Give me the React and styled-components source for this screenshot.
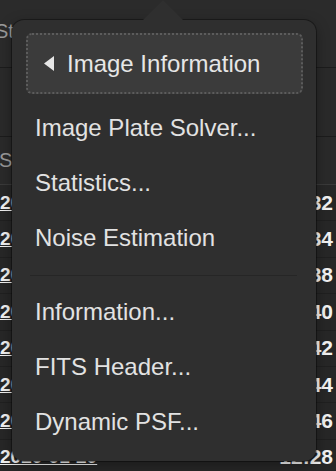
import React from "react";
import styled, { createGlobalStyle } from "styled-components";

const Global = createGlobalStyle`
  html, body { margin: 0; padding: 0; background: #272727; overflow: hidden; }
  body { font-family: "Liberation Sans", Helvetica, Arial, sans-serif; }
`;

const Page = styled.div`
  position: relative;
  width: 336px;
  height: 471px;
  overflow: hidden;
  background: #272727;
`;

const Table = styled.div`
  display: flex;
  flex-direction: column;
`;

const Band = styled.div`
  height: ${(p) => p.$h}px;
  box-sizing: border-box;
  background: ${(p) => p.$bg || "#2a2a2a"};
  border-bottom: 1px solid ${(p) => p.$line || "#1c1c1c"};
  display: flex;
  align-items: center;
  color: #9a9a9a;
  font-size: 20px;
  overflow: hidden;
  white-space: nowrap;
`;

const HeadText = styled.span`
  margin-left: ${(p) => p.$shift || 0}px;
  align-self: ${(p) => p.$align || "center"};
  margin-top: ${(p) => p.$top || 0}px;
`;

const Row = styled.div`
  height: 36.4px;
  box-sizing: border-box;
  display: flex;
  justify-content: space-between;
  align-items: center;
  border-bottom: 1px solid #202020;
  color: #f2f2f2;
  font-size: 19px;
  font-weight: bold;
  white-space: nowrap;
  padding-right: 3px;
  overflow: hidden;
`;

const Date = styled.span`
  text-decoration: underline;
`;

const Time = styled.span`
  font-size: 21px;
`;

const Popover = styled.div`
  position: absolute;
  left: 12px;
  top: 20px;
  width: 304px;
  box-sizing: border-box;
  padding: 13px 13px 12px 14px;
  background: #2f2f2f;
  border-radius: 12px;
  box-shadow: 0 0 0 1px rgba(0, 0, 0, 0.35), 0 4px 14px rgba(0, 0, 0, 0.35);
  display: flex;
  flex-direction: column;
`;

const Arrow = styled.div`
  position: absolute;
  top: -20px;
  left: 131px;
  width: 0;
  height: 0;
  border-left: 20px solid transparent;
  border-right: 20px solid transparent;
  border-bottom: 20px solid #2f2f2f;
`;

const Current = styled.div`
  height: 61px;
  box-sizing: border-box;
  border: 2px dotted #5c5c5c;
  border-radius: 6px;
  background: #3b3b3b;
  display: flex;
  align-items: center;
  gap: 13px;
  padding-left: 16px;
  color: #e6e6e6;
  font-size: 24px;
  margin-bottom: 6px;
  white-space: nowrap;
`;

const BackIcon = styled.svg`
  width: 10px;
  height: 15px;
  flex: none;
`;

const Item = styled.div`
  height: 55px;
  display: flex;
  align-items: center;
  padding-left: 9px;
  color: #e2e2e2;
  font-size: 24px;
  white-space: nowrap;
`;

const Separator = styled.div`
  height: 1px;
  background: #262626;
  margin: 10px 6px 8px 4px;
`;

const rows = [
  ["2020-01-20", "12:32"],
  ["2020-01-20", "12:34"],
  ["2020-01-20", "12:38"],
  ["2020-01-20", "12:40"],
  ["2020-01-20", "12:42"],
  ["2020-01-20", "12:44"],
  ["2020-01-20", "12:46"],
  ["2020-01-20", "12:28"],
];

export default function App() {
  return (
    <Page>
      <Global />
      <Table>
        <Band $h={68} $bg="#2b2b2b">
          <HeadText $shift={-5} $align="flex-start" $top={20}>Status</HeadText>
        </Band>
        <Band $h={69} />
        <Band $h={48} $line="#3a3a3a">
          <HeadText $shift={-1}>Source</HeadText>
        </Band>
        {rows.map(([d, t], i) => (
          <Row key={i}>
            <Date>{d}</Date>
            <Time>{t}</Time>
          </Row>
        ))}
      </Table>
      <Popover>
        <Arrow />
        <Current>
          <BackIcon viewBox="0 0 10 15">
            <path d="M10 0 L0 7.5 L10 15 Z" fill="#e6e6e6" />
          </BackIcon>
          Image Information
        </Current>
        <Item>Image Plate Solver...</Item>
        <Item>Statistics...</Item>
        <Item>Noise Estimation</Item>
        <Separator />
        <Item>Information...</Item>
        <Item>FITS Header...</Item>
        <Item>Dynamic PSF...</Item>
      </Popover>
    </Page>
  );
}
